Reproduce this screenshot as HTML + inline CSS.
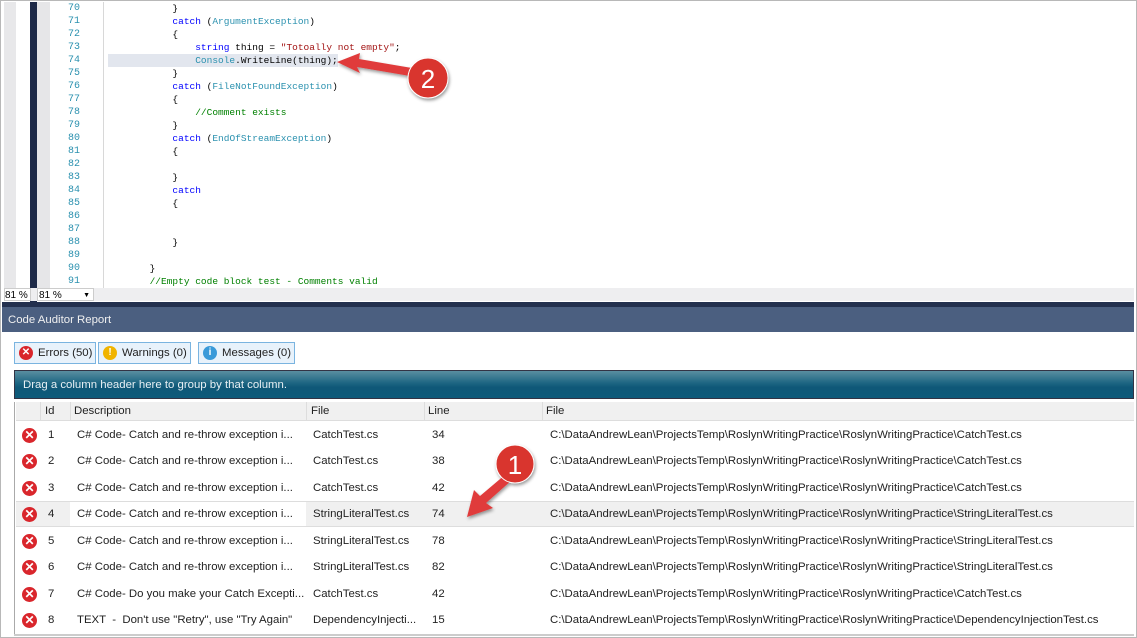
<!DOCTYPE html>
<html><head><style>
*{margin:0;padding:0;box-sizing:border-box}
body{width:1137px;height:638px;overflow:hidden;background:#fff;font-family:"Liberation Sans",sans-serif;position:relative}
.abs{position:absolute}
.code{font-family:"Liberation Mono",monospace;font-size:9.5px;white-space:pre;line-height:13px}
.ln{color:#2b91af;text-align:right;width:28px;font-size:10px}
.kw{color:#0000ff}.ty{color:#2b91af}.st{color:#a31515}.cm{color:#008000}
.row{position:absolute;left:16px;width:1118px;height:26px;font-size:11.4px;color:#222}
.row span{position:absolute;top:7px;white-space:pre}
.x{position:absolute;left:6px;top:6px;width:15px;height:15px;border-radius:50%;background:#d9262c;color:#fff;font-size:12px;font-weight:bold;text-align:center;line-height:15px}
.btn{position:absolute;top:342px;height:22px;border:1px solid #7ab4e0;background:#e8f2fb;font-size:11.4px;line-height:20px;padding-left:23px;color:#222}
.btn i{position:absolute;left:4px;top:3px;width:14px;height:14px;border-radius:50%;color:#fff;font-style:normal;font-weight:bold;font-size:10px;text-align:center;line-height:14px}
</style></head><body>
<div class="abs" style="left:0;top:0;width:1137px;height:638px;border:1px solid #b8b8b8"></div>
<div class="abs" style="left:4px;top:2px;width:12px;height:286px;background:#e8e8ea"></div>
<div class="abs" style="left:30px;top:2px;width:7px;height:300px;background:#1e2a48"></div>
<div class="abs" style="left:37px;top:2px;width:13px;height:286px;background:#e6e6e8"></div>
<div class="abs" style="left:103px;top:2px;width:1px;height:286px;background:#d8d8d8"></div>
<div class="abs" style="left:108px;top:54px;width:230px;height:13px;background:#e2e6ee"></div>
<div class="abs code ln" style="left:52px;top:2px">70
71
72
73
74
75
76
77
78
79
80
81
82
83
84
85
86
87
88
89
90
91</div>
<div class="abs code" style="left:104px;top:2px;color:#000">            }
            <span class="kw">catch</span> (<span class="ty">ArgumentException</span>)
            {
                <span class="kw">string</span> thing = <span class="st">"Totoally not empty"</span>;
                <span class="ty">Console</span>.WriteLine(thing);
            }
            <span class="kw">catch</span> (<span class="ty">FileNotFoundException</span>)
            {
                <span class="cm">//Comment exists</span>
            }
            <span class="kw">catch</span> (<span class="ty">EndOfStreamException</span>)
            {

            }
            <span class="kw">catch</span>
            {


            }

        }
        <span class="cm">//Empty code block test - Comments valid</span></div>
<div class="abs" style="left:4px;top:288px;width:1130px;height:13px;background:#eeeef0"></div>
<div class="abs" style="left:4px;top:288px;width:27px;height:13px;font-size:10px;line-height:13px;background:#fff;border:1px solid #ccc">81 %</div>
<div class="abs" style="left:37px;top:288px;width:57px;height:13px;font-size:10px;line-height:13px;background:#fff;border:1px solid #ccc;padding-left:1px">81 %<span style="position:absolute;right:3px;font-size:7px">▼</span></div>
<div class="abs" style="left:2px;top:302px;width:1132px;height:5px;background:#23304e"></div>
<div class="abs" style="left:2px;top:307px;width:1132px;height:25px;background:#4b5f80;color:#f0f0f0;font-size:11.4px;line-height:26px;padding-left:6px">Code Auditor Report</div>
<div class="btn" style="left:14px;width:82px"><i style="background:#d9262c">✕</i>Errors (50)</div>
<div class="btn" style="left:98px;width:93px"><i style="background:#f0b400">!</i>Warnings (0)</div>
<div class="btn" style="left:198px;width:97px"><i style="background:#3a9ad9">i</i>Messages (0)</div>
<div class="abs" style="left:14px;top:370px;width:1120px;height:29px;border:1px solid #334;background:linear-gradient(#5a8ea0 0%,#1d6582 45%,#0f5878 60%,#0e5a7a 100%);color:#e8f0f4;font-size:11.4px;line-height:28px;padding-left:8px">Drag a column header here to group by that column.</div>
<div class="abs" style="left:16px;top:402px;width:1118px;height:19px;background:#f0f0f0;border-bottom:1px solid #ddd;font-size:11.4px;color:#222">
<span class="abs" style="left:29px;top:3px">Id</span>
<span class="abs" style="left:58px;top:3px">Description</span>
<span class="abs" style="left:295px;top:3px">File</span>
<span class="abs" style="left:412px;top:3px">Line</span>
<span class="abs" style="left:530px;top:3px">File</span>
<div class="abs" style="left:24px;top:0;width:1px;height:19px;background:#ddd"></div>
<div class="abs" style="left:54px;top:0;width:1px;height:19px;background:#ddd"></div>
<div class="abs" style="left:290px;top:0;width:1px;height:19px;background:#ddd"></div>
<div class="abs" style="left:408px;top:0;width:1px;height:19px;background:#ddd"></div>
<div class="abs" style="left:526px;top:0;width:1px;height:19px;background:#ddd"></div>
</div>
<div class="abs" style="left:14px;top:402px;width:1px;height:234px;background:#aaa"></div>
<div class="abs" style="left:16px;top:501px;width:1118px;height:26px;background:#f0f0f0;border-top:1px solid #ddd;border-bottom:1px solid #ddd"></div>
<div class="abs" style="left:70px;top:502px;width:236px;height:24px;background:#fff"></div>

<div class="row" style="top:422px"><div class="x">✕</div><span style="left:32px">1</span><span style="left:61px">C# Code- Catch and re-throw exception i...</span><span style="left:297px">CatchTest.cs</span><span style="left:416px">34</span><span style="left:534px">C:\DataAndrewLean\ProjectsTemp\RoslynWritingPractice\RoslynWritingPractice\CatchTest.cs</span></div>
<div class="row" style="top:448px"><div class="x">✕</div><span style="left:32px">2</span><span style="left:61px">C# Code- Catch and re-throw exception i...</span><span style="left:297px">CatchTest.cs</span><span style="left:416px">38</span><span style="left:534px">C:\DataAndrewLean\ProjectsTemp\RoslynWritingPractice\RoslynWritingPractice\CatchTest.cs</span></div>
<div class="row" style="top:475px"><div class="x">✕</div><span style="left:32px">3</span><span style="left:61px">C# Code- Catch and re-throw exception i...</span><span style="left:297px">CatchTest.cs</span><span style="left:416px">42</span><span style="left:534px">C:\DataAndrewLean\ProjectsTemp\RoslynWritingPractice\RoslynWritingPractice\CatchTest.cs</span></div>
<div class="row" style="top:501px"><div class="x">✕</div><span style="left:32px">4</span><span style="left:61px">C# Code- Catch and re-throw exception i...</span><span style="left:297px">StringLiteralTest.cs</span><span style="left:416px">74</span><span style="left:534px">C:\DataAndrewLean\ProjectsTemp\RoslynWritingPractice\RoslynWritingPractice\StringLiteralTest.cs</span></div>
<div class="row" style="top:528px"><div class="x">✕</div><span style="left:32px">5</span><span style="left:61px">C# Code- Catch and re-throw exception i...</span><span style="left:297px">StringLiteralTest.cs</span><span style="left:416px">78</span><span style="left:534px">C:\DataAndrewLean\ProjectsTemp\RoslynWritingPractice\RoslynWritingPractice\StringLiteralTest.cs</span></div>
<div class="row" style="top:554px"><div class="x">✕</div><span style="left:32px">6</span><span style="left:61px">C# Code- Catch and re-throw exception i...</span><span style="left:297px">StringLiteralTest.cs</span><span style="left:416px">82</span><span style="left:534px">C:\DataAndrewLean\ProjectsTemp\RoslynWritingPractice\RoslynWritingPractice\StringLiteralTest.cs</span></div>
<div class="row" style="top:581px"><div class="x">✕</div><span style="left:32px">7</span><span style="left:61px">C# Code- Do you make your Catch Excepti...</span><span style="left:297px">CatchTest.cs</span><span style="left:416px">42</span><span style="left:534px">C:\DataAndrewLean\ProjectsTemp\RoslynWritingPractice\RoslynWritingPractice\CatchTest.cs</span></div>
<div class="row" style="top:607px"><div class="x">✕</div><span style="left:32px">8</span><span style="left:61px">TEXT  -  Don't use "Retry", use "Try Again"</span><span style="left:297px">DependencyInjecti...</span><span style="left:416px">15</span><span style="left:534px">C:\DataAndrewLean\ProjectsTemp\RoslynWritingPractice\RoslynWritingPractice\DependencyInjectionTest.cs</span></div>
<div class="abs" style="left:14px;top:634px;width:1120px;height:2px;background:#ccc"></div>

<svg class="abs" style="left:0;top:0" width="1137" height="638">
<defs><filter id="s"><feDropShadow dx="1" dy="2" stdDeviation="1.5" flood-opacity=".4"/></filter></defs>
<g filter="url(#s)" fill="#e03a3a">
<path d="M337,62 L360,53 L359,59 L412,68 L410,76 L357,67 L360,73 Z"/>
<circle cx="428" cy="78" r="20" fill="#d9352f" stroke="#fff" stroke-width="1"/>
<path d="M467,517 L474,490 L480,496 L506,474 L512,480 L486,503 L493,508 Z"/>
<circle cx="515" cy="464" r="19" fill="#d9352f" stroke="#fff" stroke-width="1"/>
</g>
<text x="428" y="88" fill="#fff" font-family="Liberation Sans" font-size="26" text-anchor="middle">2</text>
<text x="515" y="474" fill="#fff" font-family="Liberation Sans" font-size="26" text-anchor="middle">1</text>
</svg>
</body></html>
